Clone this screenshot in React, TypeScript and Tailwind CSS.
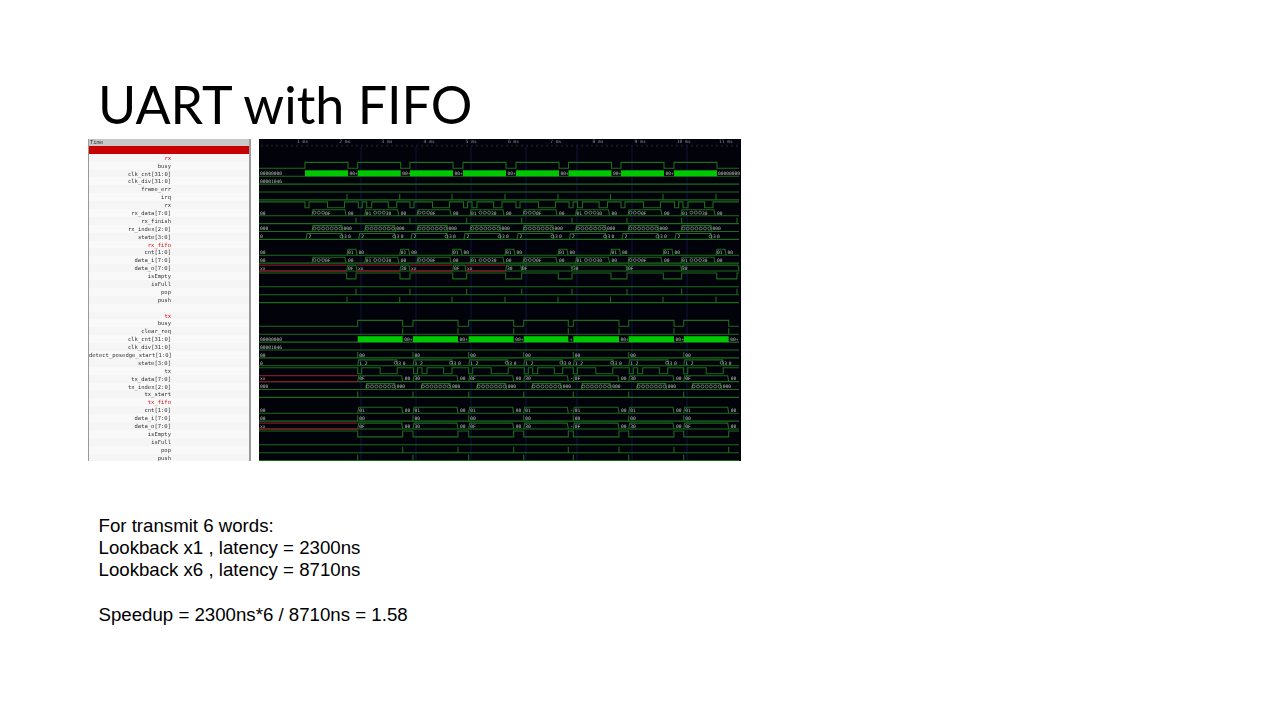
const GREEN = "#1d6c1d";
const RED = "#7d1a24";
const LABEL = "#b4c0b4";

const names: [string, boolean?][] = [
  ["rx", true], ["busy"], ["clk_cnt[31:0]"], ["clk_div[31:0]"], ["frame_err"], ["irq"], ["rx"],
  ["rx_data[7:0]"], ["rx_finish"], ["rx_index[2:0]"], ["state[3:0]"], ["rx_fifo", true], ["cnt[1:0]"],
  ["data_i[7:0]"], ["data_o[7:0]"], ["isEmpty"], ["isFull"], ["pop"], ["push"], [""],
  ["tx", true], ["busy"], ["clear_req"], ["clk_cnt[31:0]"], ["clk_div[31:0]"], ["detect_posedge_start[1:0]"],
  ["state[3:0]"], ["tx"], ["tx_data[7:0]"], ["tx_index[2:0]"], ["tx_start"], ["tx_fifo", true], ["cnt[1:0]"],
  ["data_i[7:0]"], ["data_o[7:0]"], ["isEmpty"], ["isFull"], ["pop"], ["push"],
];

const X0 = 259;
const X1 = 739;
const rowY = (i: number) => 157.7 + i * 7.9;
const HI = 3.2;
const LO = 2.7;

type Span = [number, number];

const rxStarts = [305, 357.7, 410, 463, 516, 568.5, 621, 674];
const rxEnds = rxStarts.map((s) => s + 43);
const rxPop = [356, 410, 466.7, 521.7, 572, 627, 681.7, 737];
const txStarts = [357.7, 413, 468.7, 523.7, 573.3, 628.7, 683.7];
const txEnds = [402.7, 458, 513.7, 568.3, 619, 674, 728.7];

function Digital({ row, high, start = false }: { row: number; high: Span[]; start?: boolean }) {
  const c = rowY(row);
  const hi = c - HI;
  const lo = c + LO;
  let d = `M${X0} ${start ? hi : lo}`;
  for (const [a, b] of high) {
    if (a > X0) d += `H${a}V${hi}`;
    d += `H${b}`;
    if (b < X1) d += `V${lo}`;
  }
  if (high[high.length - 1][1] < X1) d += `H${X1}`;
  return <path d={d} fill="none" stroke={GREEN} strokeWidth="1.1" />;
}

function Ticks({ row, at }: { row: number; at: number[] }) {
  const c = rowY(row);
  return (
    <path
      d={`M${X0} ${c + LO}H${X1}` + at.map((x) => `M${x} ${c - HI}V${c + LO}`).join("")}
      fill="none"
      stroke={GREEN}
      strokeWidth="1.1"
    />
  );
}

function Label({ x, row, children }: { x: number; row: number; children: string }) {
  return (
    <text x={x} y={rowY(row) + 1.5} fontSize="4.6" fill={LABEL} fontFamily="'DejaVu Sans Mono', monospace">
      {children}
    </text>
  );
}

// bus row: the bottom rail runs through, the top rail only where the value is not zero
function Bus({ row, tops = [], color = GREEN }: { row: number; tops?: Span[]; color?: string }) {
  const c = rowY(row);
  const d =
    `M${X0} ${c + LO}H${X1}` +
    tops.map(([a, b]) => `M${a} ${c + LO}L${a + 1} ${c - HI}H${b - 1}L${b} ${c + LO}`).join("");
  return <path d={d} fill="none" stroke={color} strokeWidth="1.1" />;
}

function Unknown({ row, spans }: { row: number; spans: Span[] }) {
  const c = rowY(row);
  return (
    <path
      d={spans.map(([a, b]) => `M${a} ${c - HI}H${b}M${a} ${c + LO}H${b}`).join("")}
      fill="none"
      stroke={RED}
      strokeWidth="1.3"
    />
  );
}

function Circles({ x, row, n, gap = 4.3 }: { x: number; row: number; n: number; gap?: number }) {
  return (
    <>
      {Array.from({ length: n }, (_, i) => (
        <circle key={i} cx={x + i * gap} cy={rowY(row) - 0.3} r="1.5" fill="none" stroke={LABEL} strokeWidth="0.55" />
      ))}
    </>
  );
}

function RxData({ row }: { row: number }) {
  return (
    <>
      <Bus row={row} tops={rxStarts.map((s) => [s + 7, s + 41])} />
      <Label x={260} row={row}>00</Label>
      {rxStarts.map((s, i) =>
        i % 2 === 0 ? (
          <g key={s}>
            <Circles x={s + 9.5} row={row} n={3} />
            <Label x={s + 20} row={row}>0F</Label>
            <Label x={s + 43} row={row}>00</Label>
          </g>
        ) : (
          <g key={s}>
            <Label x={s + 8} row={row}>01</Label>
            <Circles x={s + 17.5} row={row} n={3} />
            <Label x={s + 28} row={row}>30</Label>
            <Label x={s + 43} row={row}>00</Label>
          </g>
        ),
      )}
    </>
  );
}

function Waveform() {
  const ticks = Array.from({ length: 96 }, (_, i) => X0 + 3 + i * 5);
  const txFill = txStarts.map((s, i) => [s, txEnds[i]] as Span);
  const pattern = [[0, 4, 22.5, 39.5], [0.6, 4.6, 9, 14, 30.6, 39]];
  const wordLine = (starts: number[]) => starts.flatMap((s, i) => pattern[i % 2].map((v) => s + v));
  const toggle = (points: number[]) => {
    const pairs: Span[] = [[X0, points[0]]];
    for (let i = 1; i < points.length; i += 2) {
      pairs.push([points[i], points[i + 1] ?? X1]);
    }
    return pairs;
  };
  const rxEmpty: Span[] = [
    [X0, 346.7], [356, 400], [410, 452.7], [466.7, 505.7], [521.7, 558.3], [572, 611], [627, 663.3], [681.7, 716.7], [737, X1],
  ];
  const txEmptyHigh: Span[] = [
    [X0, 357.7], ...txEnds.map((e, i) => [e, txStarts[i + 1] ?? X1] as Span),
  ];
  const txValue = (i: number) => (i % 2 === 0 ? "0F" : "30");
  const rxOutTops: Span[] = [[346.7, 357], [400, 410], [452.7, 466], [505.7, 521.7], [521.7, 572], [572, 627], [627, 681.7], [681.7, X1]];

  return (
    <svg viewBox="259 139 482 322" className="w-[482px] h-[322px] shrink-0 bg-[#02020a]">
      {/* ruler */}
      <path d={ticks.map((x) => `M${x} 144.5V147`).join("")} stroke="#3c4046" strokeWidth="0.6" />
      {Array.from({ length: 11 }, (_, i) => (
        <text key={i} x={297 + i * 42.2} y={143} fontSize="4.6" fill="#8a8f96" fontFamily="'DejaVu Sans Mono', monospace">
          {i + 1} ms
        </text>
      ))}
      {[361, 416, 471, 526, 577, 632, 687].map((x) => (
        <path key={x} d={`M${x} 147V461`} stroke="#14184a" strokeWidth="0.8" />
      ))}

      {/* rx */}
      <Digital row={1} high={rxStarts.map((s, i) => [s, rxEnds[i]])} />
      <Bus row={2} />
      <Label x={260} row={2}>00000000</Label>
      {rxStarts.map((s, i) => (
        <g key={s}>
          <rect x={s} y={rowY(2) - HI} width="43" height={HI + LO} fill="#00c800" />
          {i < 7 && <Label x={s + 44.5} row={2}>00+</Label>}
        </g>
      ))}
      <Label x={718} row={2}>00000000</Label>
      <Bus row={3} />
      <Label x={260} row={3}>00001046</Label>
      <Ticks row={4} at={[]} />
      <Ticks row={5} at={rxEnds.map((e) => e - 1)} />
      <Digital row={6} high={toggle(wordLine(rxStarts))} start />
      <RxData row={7} />
      <Ticks row={8} at={rxPop} />
      <Bus row={9} tops={rxStarts.map((s) => [s + 7, s + 38])} />
      <Label x={260} row={9}>000</Label>
      {rxStarts.map((s) => (
        <g key={s}>
          <Circles x={s + 9.5} row={9} n={7} />
          <Label x={s + 38.5} row={9}>000</Label>
        </g>
      ))}
      <Bus row={10} tops={rxStarts.map((s) => [s + 1, s + 38])} />
      <Label x={260} row={10}>0</Label>
      {rxStarts.map((s) => (
        <g key={s}>
          <Label x={s + 3.5} row={10}>2</Label>
          <Circles x={s + 36.5} row={10} n={1} />
          <Label x={s + 39} row={10}>3</Label>
          <Label x={s + 43} row={10}>0</Label>
        </g>
      ))}
      <Bus row={12} tops={rxEnds.map((e) => [e - 1, e + 9])} />
      <Label x={260} row={12}>00</Label>
      {rxEnds.map((e) => (
        <g key={e}>
          <Label x={e} row={12}>01</Label>
          <Label x={e + 10.5} row={12}>00</Label>
        </g>
      ))}
      <RxData row={13} />
      <Bus row={14} tops={rxOutTops} />
      <Unknown row={14} spans={[[X0, 346.7], [357, 400], [410, 452.7], [466, 505.7]]} />
      {([[260, "xx"], [348, "0F"], [358, "xx"], [401, "30"], [411, "xx"], [454, "0F"], [467, "xx"], [507, "30"], [522, "0F"], [573, "30"], [628, "0F"], [682, "30"]] as [number, string][]).map(([x, v]) => (
        <Label key={x} x={x} row={14}>{v}</Label>
      ))}
      <Digital row={15} high={rxEmpty} start />
      <Ticks row={16} at={[]} />
      <Ticks row={17} at={rxPop} />
      <Ticks row={18} at={rxEnds.map((e) => e - 1)} />

      {/* tx */}
      <Digital row={21} high={txFill} />
      <Ticks row={22} at={txEnds} />
      <Bus row={23} />
      <Label x={260} row={23}>00000000</Label>
      {txStarts.map((s, i) => (
        <g key={s}>
          <rect x={s} y={rowY(23) - HI} width={txEnds[i] - s} height={HI + LO} fill="#00c800" />
          <Label x={txEnds[i] + 1.5} row={23}>{i === 3 ? "+" : "00+"}</Label>
        </g>
      ))}
      <Bus row={24} />
      <Label x={260} row={24}>00001046</Label>
      <Ticks row={25} at={txStarts} />
      <Label x={260} row={25}>00</Label>
      <Bus row={26} tops={txStarts.map((s, i) => [s, txEnds[i] - 5])} />
      <Label x={260} row={26}>0</Label>
      <Digital row={27} high={toggle(wordLine(txStarts))} start />
      <Bus row={28} tops={txFill} />
      <Unknown row={28} spans={[[X0, 357.7]]} />
      <Label x={260} row={28}>xx</Label>
      <Bus row={29} tops={txStarts.map((s) => [s + 8, s + 38])} />
      <Label x={260} row={29}>000</Label>
      <Ticks row={30} at={txStarts} />
      <Bus row={32} tops={txFill} />
      <Label x={260} row={32}>00</Label>
      <Ticks row={33} at={txStarts} />
      <Label x={260} row={33}>00</Label>
      <Bus row={34} tops={txFill} />
      <Unknown row={34} spans={[[X0, 357.7]]} />
      <Label x={260} row={34}>xx</Label>
      {txStarts.map((s, i) => (
        <g key={s}>
          <Label x={s + 1.5} row={25}>00</Label>
          <Label x={s + 1.5} row={26}>1 2</Label>
          <Circles x={txEnds[i] - 7} row={26} n={1} />
          <Label x={txEnds[i] - 4.5} row={26}>3</Label>
          <Label x={txEnds[i]} row={26}>0</Label>
          <Label x={s + 1.5} row={28}>{txValue(i)}</Label>
          <Label x={txEnds[i] + 2} row={28}>{i === 3 ? "-" : "00"}</Label>
          <Circles x={s + 10} row={29} n={7} />
          <Label x={s + 39} row={29}>000</Label>
          <Label x={s + 1.5} row={32}>01</Label>
          <Label x={txEnds[i] + 2} row={32}>{i === 3 ? "-" : "00"}</Label>
          <Label x={s + 1.5} row={33}>00</Label>
          <Label x={s + 1.5} row={34}>{txValue(i)}</Label>
          <Label x={txEnds[i] + 2} row={34}>{i === 3 ? "-" : "00"}</Label>
        </g>
      ))}
      <Digital row={35} high={txEmptyHigh} start />
      <Ticks row={36} at={[]} />
      <Ticks row={37} at={txEnds} />
      <Ticks row={38} at={txStarts} />
    </svg>
  );
}

function SignalList() {
  return (
    <div className="w-[163px] h-[322px] shrink-0 overflow-hidden border-l border-r-2 border-[#9a9a9a] bg-[#f6f6f6] font-['DejaVu_Sans_Mono',monospace] text-[5.5px]">
      <div className="h-[7px] leading-[7px] bg-[#c8c8c8] text-[#333] pl-px">Time</div>
      <div className="h-[7.75px] bg-[#c80000]" />
      {names.map(([name, isGroup], i) => (
        <div
          key={i}
          className={`h-[7.9px] leading-[9.4px] text-right pr-[78px] whitespace-nowrap ${i % 2 ? "bg-[#f9f9f9]" : "bg-[#f5f5f5]"} ${isGroup ? "text-[#e01010]" : "text-[#333]"}`}
        >
          {name}
        </div>
      ))}
    </div>
  );
}

export default function App() {
  return (
    <div className="w-[1280px] h-[720px] bg-white overflow-hidden font-['Liberation_Sans',sans-serif] text-black">
      <div className="pt-[73px] pl-[98px] h-[139px]">
        <h1 className="font-['Lato',sans-serif] text-[52px] leading-[62px] font-normal">UART with FIFO</h1>
      </div>
      <div className="flex ml-[88px] w-fit gap-[8px] blur-[0.4px]">
        <SignalList />
        <Waveform />
      </div>
      <div className="pl-[98.5px] pt-[53.5px] text-[18.67px] leading-[22.4px]">
        <p>For transmit 6 words:</p>
        <p>Lookback x1 , latency = 2300ns</p>
        <p>Lookback x6 , latency = 8710ns</p>
        <p className="h-[22.4px]" />
        <p>Speedup = 2300ns*6 / 8710ns = 1.58</p>
      </div>
    </div>
  );
}
